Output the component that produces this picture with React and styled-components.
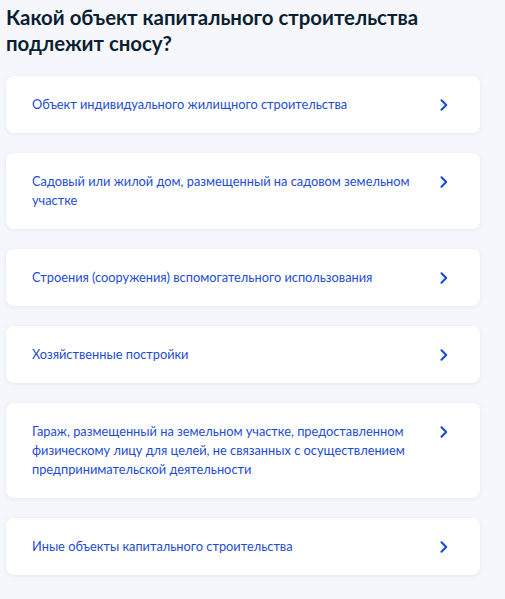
import React from "react";
import styled, { createGlobalStyle } from "styled-components";

const Global = createGlobalStyle`
  html, body { margin: 0; padding: 0; background: #f5f7fc; }
  body { font-family: Lato, "Noto Sans", sans-serif; -webkit-font-smoothing: antialiased; }
`;

const Page = styled.div`
  width: 474px;
  margin-left: 6px;
  padding-top: 4px;
  padding-bottom: 24px;
`;

const Title = styled.h1`
  margin: 0 0 20px;
  font-family: Lato, "Noto Sans", sans-serif;
  font-weight: 700;
  font-size: 20.4px;
  line-height: 26px;
  color: #0b1f33;
`;

const List = styled.div`
  display: flex;
  flex-direction: column;
  gap: 20px;
`;

const Card = styled.button`
  display: flex;
  align-items: flex-start;
  width: 100%;
  box-sizing: border-box;
  padding: 19px 32px 19px 26px;
  background: #ffffff;
  border: none;
  border-radius: 8px;
  box-shadow: 0 1px 4px rgba(176, 190, 215, 0.25);
  text-align: left;
  cursor: pointer;
`;

const Label = styled.span`
  flex: 1;
  max-width: 390px;
  font-family: Lato, "Noto Sans", sans-serif;
  font-size: 12.8px;
  line-height: 19px;
  color: #1d4cd3;
`;

const Chevron = styled.span`
  margin-left: auto;
  display: flex;
  align-items: center;
  height: 19px;
  width: 8px;
  color: #0d4cd3;
`;

const items = [
  "Объект индивидуального жилищного строительства",
  "Садовый или жилой дом, размещенный на садовом земельном участке",
  "Строения (сооружения) вспомогательного использования",
  "Хозяйственные постройки",
  "Гараж, размещенный на земельном участке, предоставленном физическому лицу для целей, не связанных с осуществлением предпринимательской деятельности",
  "Иные объекты капитального строительства",
];

export default function App() {
  return (
    <>
      <Global />
      <Page>
        <Title>Какой объект капитального строительства подлежит сносу?</Title>
        <List>
          {items.map((t) => (
            <Card key={t}>
              <Label>{t}</Label>
              <Chevron>
                <svg width="8" height="12" viewBox="0 0 8 12" fill="none">
                  <path d="M1.5 1.2 L6.2 6 L1.5 10.8" stroke="currentColor" strokeWidth="2" strokeLinecap="round" strokeLinejoin="round" />
                </svg>
              </Chevron>
            </Card>
          ))}
        </List>
      </Page>
    </>
  );
}
